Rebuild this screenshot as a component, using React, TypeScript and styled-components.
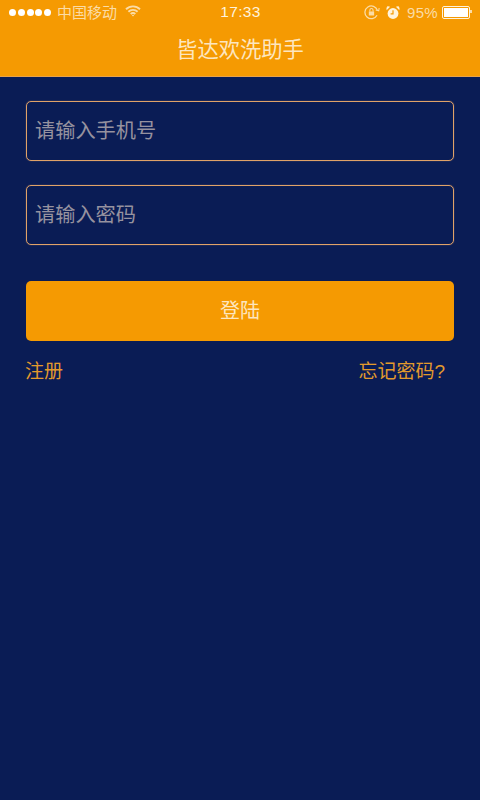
import React from 'react'
import styled, { createGlobalStyle } from 'styled-components'

const GlobalStyle = createGlobalStyle`
  html, body {
    margin: 0;
    padding: 0;
    background: #0a1c55;
  }
  body {
    font-family: "Liberation Sans", "Noto Sans CJK SC", sans-serif;
  }
  input::placeholder {
    color: #96929f;
    opacity: 1;
  }
`

const Page = styled.div`
  width: 480px;
  height: 800px;
  background: #0a1c55;
  overflow: hidden;
`

const Header = styled.header`
  height: 76px;
  background: #f59a02;
  border-bottom: 1px solid #e8a24a;
  box-sizing: content-box;
`

const StatusBar = styled.div`
  height: 25px;
  padding: 0 8px 0 9px;
  display: grid;
  grid-template-columns: 1fr auto 1fr;
  align-items: center;
  color: #fbdca6;
  font-size: 15px;
`

const StatusLeft = styled.div`
  display: flex;
  align-items: center;
`

const StatusRight = styled.div`
  display: flex;
  align-items: center;
  justify-content: flex-end;
`

const Signal = styled.div`
  display: flex;
  gap: 1.75px;
  margin-right: 6px;
`

const Dot = styled.span`
  width: 7px;
  height: 7px;
  border-radius: 50%;
  background: #fff;
`

const Carrier = styled.span`
  margin-right: 8px;
  padding-bottom: 3px;
`

const Clock = styled.span`
  font-size: 15.5px;
  color: #fff3dc;
  letter-spacing: 0.3px;
  padding-bottom: 2px;
`

const Percent = styled.span`
  font-size: 15px;
  margin: 0 4px 0 7px;
  letter-spacing: 0.3px;
`

const Battery = styled.div`
  width: 24px;
  height: 9px;
  padding: 1px;
  border: 1px solid #fff3dc;
  border-radius: 2px;
  display: flex;
  margin-right: 2px;
  position: relative;

  &::after {
    content: '';
    position: absolute;
    right: -3px;
    top: 3px;
    width: 2px;
    height: 3px;
    background: #fbdca6;
  }
`

const BatteryFill = styled.span`
  flex: 1;
  background: #fff;
`

const Title = styled.h1`
  margin: 0;
  height: 51px;
  line-height: 50px;
  text-align: center;
  font-size: 21.3px;
  font-weight: 400;
  color: #fde6bf;
`

const Form = styled.main`
  padding: 24px 26px 0;
  display: flex;
  flex-direction: column;
`

const Field = styled.input`
  box-sizing: border-box;
  width: 100%;
  height: 60px;
  margin-bottom: 24px;
  padding: 0 8px;
  border: 1px solid #e0a268;
  border-radius: 5px;
  box-shadow: 0 0 1px #b98a72;
  background: transparent;
  outline: none;
  color: #fff;
  font-family: inherit;
  font-size: 20.2px;
`

const SubmitButton = styled.button`
  height: 60px;
  margin-top: 12px;
  padding: 0 0 4px;
  border: none;
  border-radius: 5px;
  background: #f59a02;
  color: #fde6bf;
  font-family: inherit;
  font-size: 20px;
`

const Links = styled.div`
  display: flex;
  justify-content: space-between;
  margin-left: -1px;
  padding: 20px 9px 0 0;
`

const TextLink = styled.a`
  color: #e39a2c;
  font-size: 19px;
  line-height: 22px;
`

const WifiIcon = () => (
  <svg width="16" height="12" viewBox="0 0 16 12" fill="none" stroke="#fbdca6" strokeWidth="1.9" style={{ marginBottom: 3 }}>
    <path d="M1 4.2a10 10 0 0 1 14 0" />
    <path d="M3.4 6.7a6.6 6.6 0 0 1 9.2 0" />
    <path d="M5.7 9a3.3 3.3 0 0 1 4.6 0" />
    <path d="M8 11.6 6.8 10.3a1.7 1.7 0 0 1 2.4 0z" fill="#fbdca6" stroke="none" />
  </svg>
)

const RotationLockIcon = () => (
  <svg width="16" height="15" viewBox="0 0 15 14" fill="none" stroke="#fbdca6" strokeWidth="1.2">
    <path d="M12.2 9.6A6 6 0 1 1 12.6 5" />
    <path d="M11 4.6l2.8.8.4-2.6" strokeWidth="1" />
    <rect x="4.5" y="6" width="5" height="3.8" fill="#fbdca6" stroke="none" />
    <path d="M5.5 6V4.8a1.5 1.5 0 0 1 3 0V6" strokeWidth="1" />
  </svg>
)

const AlarmIcon = () => (
  <svg width="14" height="14" viewBox="0 0 14 14" style={{ marginLeft: 6 }}>
    <circle cx="7" cy="7.5" r="5.4" fill="#fff3dc" />
    <path d="M7 4.2V7.8H4.6" fill="none" stroke="#f59a02" strokeWidth="1.2" />
    <path d="M0.8 3.4 3.4 1 1.4 0.8zM13.2 3.4 10.6 1l2-.2z" fill="#fff3dc" stroke="#fff3dc" />
  </svg>
)

const App = () => {
  return (
    <Page>
      <GlobalStyle />
      <Header>
        <StatusBar>
          <StatusLeft>
            <Signal>
              {[0, 1, 2, 3, 4].map((i) => <Dot key={i} />)}
            </Signal>
            <Carrier>中国移动</Carrier>
            <WifiIcon />
          </StatusLeft>
          <Clock>17:33</Clock>
          <StatusRight>
            <RotationLockIcon />
            <AlarmIcon />
            <Percent>95%</Percent>
            <Battery><BatteryFill /></Battery>
          </StatusRight>
        </StatusBar>
        <Title>皆达欢洗助手</Title>
      </Header>
      <Form>
        <Field placeholder="请输入手机号" />
        <Field placeholder="请输入密码" type="password" />
        <SubmitButton>登陆</SubmitButton>
        <Links>
          <TextLink>注册</TextLink>
          <TextLink>忘记密码?</TextLink>
        </Links>
      </Form>
    </Page>
  )
}

export default App
